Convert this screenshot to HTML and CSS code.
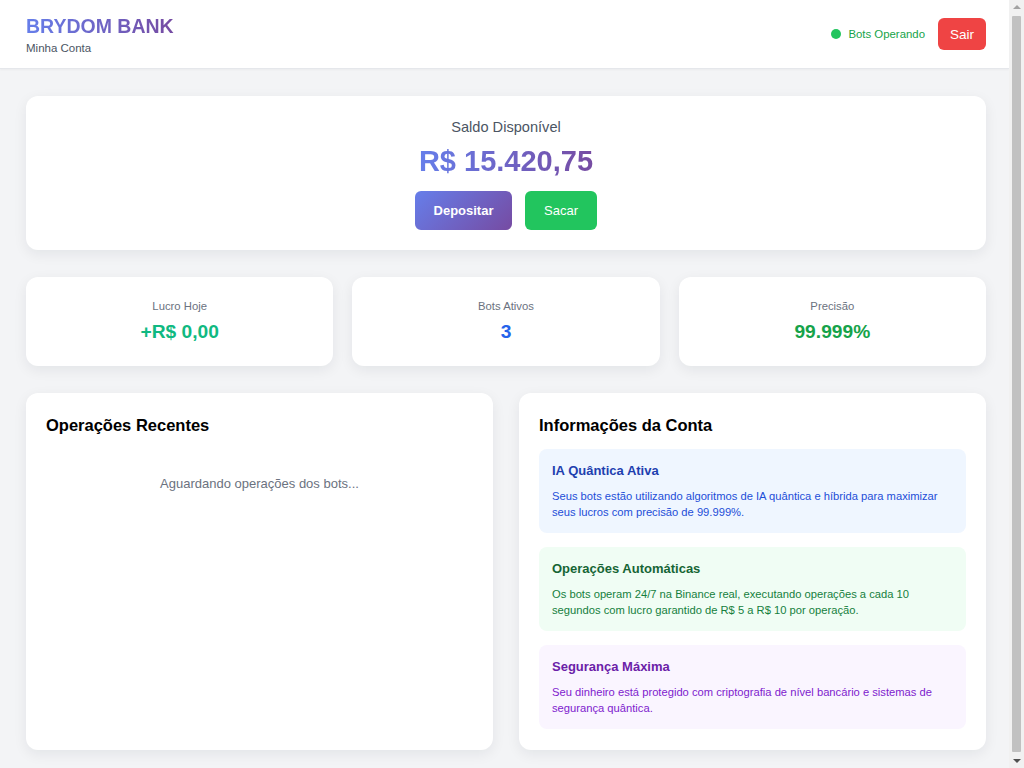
FILE: index.html
```html
<!DOCTYPE html>
<html lang="pt-BR">
<head>
<meta charset="utf-8">
<title>Brydom Bank - Minha Conta</title>
<link rel="stylesheet" href="styles.css">
</head>
<body>
<div class="page">
  <header class="topbar">
    <div class="topbar-inner">
      <div class="brand">
        <h1 class="brand-name">BRYDOM BANK</h1>
        <p class="brand-sub">Minha Conta</p>
      </div>
      <div class="top-actions">
        <span class="status"><span class="status-dot"></span>Bots Operando</span>
        <button class="btn-logout">Sair</button>
      </div>
    </div>
  </header>

  <main class="main">
    <section class="card balance">
      <p class="balance-label">Saldo Disponível</p>
      <p class="balance-value">R$ 15.420,75</p>
      <div class="balance-actions">
        <button class="btn btn-deposit">Depositar</button>
        <button class="btn btn-withdraw">Sacar</button>
      </div>
    </section>

    <section class="stats">
      <div class="card stat">
        <p class="stat-label">Lucro Hoje</p>
        <p class="stat-value green">+R$ 0,00</p>
      </div>
      <div class="card stat">
        <p class="stat-label">Bots Ativos</p>
        <p class="stat-value blue">3</p>
      </div>
      <div class="card stat">
        <p class="stat-label">Precisão</p>
        <p class="stat-value green2">99.999%</p>
      </div>
    </section>

    <section class="panels">
      <div class="card panel">
        <h2 class="panel-title">Operações Recentes</h2>
        <p class="empty">Aguardando operações dos bots...</p>
      </div>
      <div class="card panel">
        <h2 class="panel-title">Informações da Conta</h2>
        <div class="info info-blue">
          <h3 class="info-title">IA Quântica Ativa</h3>
          <p class="info-text">Seus bots estão utilizando algoritmos de IA quântica e híbrida para maximizar seus lucros com precisão de 99.999%.</p>
        </div>
        <div class="info info-green">
          <h3 class="info-title">Operações Automáticas</h3>
          <p class="info-text">Os bots operam 24/7 na Binance real, executando operações a cada 10 segundos com lucro garantido de R$ 5 a R$ 10 por operação.</p>
        </div>
        <div class="info info-purple">
          <h3 class="info-title">Segurança Máxima</h3>
          <p class="info-text">Seu dinheiro está protegido com criptografia de nível bancário e sistemas de segurança quântica.</p>
        </div>
      </div>
    </section>
  </main>
</div>
<div class="scrollbar" aria-hidden="true">
  <span class="sb-arrow sb-up"></span>
  <span class="sb-thumb"></span>
  <span class="sb-arrow sb-down"></span>
</div>
</body>
</html>
```

FILE: styles.css
```css
* { box-sizing: border-box; }
html, body { margin: 0; padding: 0; }
body {
  font-family: "Liberation Sans", Arial, sans-serif;
  background: #f3f4f6;
  color: #111827;
}
p, h1, h2, h3 { margin: 0; }

.page {
  margin-right: 15px;
}

.topbar {
  background: #fff;
  border-bottom: 1px solid #e5e7eb;
  box-shadow: 0 1px 2px rgba(0,0,0,0.04);
}
.topbar-inner {
  height: 68px;
  padding: 0 23px 0 26px;
  display: flex;
  align-items: center;
  justify-content: space-between;
}
.brand-name {
  font-size: 19.5px;
  line-height: 24px;
  font-weight: 700;
  background: linear-gradient(90deg, #667eea, #764ba2);
  -webkit-background-clip: text;
  background-clip: text;
  color: transparent;
  display: inline-block;
  margin-top: 1px;
}
.brand-sub {
  font-size: 11.5px;
  line-height: 16px;
  color: #4b5563;
  margin-top: 2px;
}
.top-actions {
  display: flex;
  align-items: center;
  gap: 12px;
}
.status {
  display: flex;
  align-items: center;
  gap: 7px;
  font-size: 11.4px;
  color: #16a34a;
}
.status-dot {
  width: 10px;
  height: 10px;
  border-radius: 50%;
  background: #22c55e;
}
.btn-logout {
  font-family: inherit;
  background: #ef4444;
  color: #fff;
  border: 0;
  border-radius: 6px;
  width: 48px;
  height: 32px;
  font-size: 13.5px;
  margin-left: 1px;
}

.main {
  padding: 27px 23px 26px 26px;
}
.card {
  background: #fff;
  border-radius: 12px;
  box-shadow: 0 4px 14px rgba(17,24,39,0.07);
}

.balance {
  padding: 20px 20px 20px;
  text-align: center;
}
.balance-label {
  font-size: 14.6px;
  line-height: 22px;
  color: #4b5563;
}
.balance-value {
  font-size: 29px;
  line-height: 36px;
  font-weight: 700;
  margin-top: 5px;
  background: linear-gradient(90deg, #667eea, #764ba2);
  -webkit-background-clip: text;
  background-clip: text;
  color: transparent;
  display: inline-block;
}
.balance-actions {
  display: flex;
  justify-content: center;
  gap: 13px;
  margin-top: 12px;
}
.btn {
  font-family: inherit;
  border: 0;
  border-radius: 6px;
  height: 39px;
  font-size: 13px;
  color: #fff;
}
.btn-deposit {
  width: 97px;
  font-weight: 700;
  background: linear-gradient(135deg, #667eea, #764ba2);
}
.btn-withdraw {
  width: 72px;
  background: #22c55e;
}

.stats {
  display: grid;
  grid-template-columns: repeat(3, 1fr);
  gap: 19px;
  margin-top: 27px;
}
.stat {
  height: 89px;
  padding-top: 20px;
  text-align: center;
}
.stat-label {
  font-size: 11.3px;
  line-height: 16px;
  color: #6b7280;
  margin-top: 1px;
}
.stat-value {
  font-size: 19.2px;
  line-height: 24px;
  font-weight: 700;
  margin-top: 6px;
}
.green { color: #10b981; }
.blue { color: #2563eb; }
.green2 { color: #16a34a; }

.panels {
  display: grid;
  grid-template-columns: 1fr 1fr;
  gap: 26px;
  margin-top: 27px;
}
.panel {
  padding: 20px 20px 21px;
}
.panel-title {
  font-size: 16.5px;
  line-height: 22px;
  font-weight: 700;
  color: #000;
  margin-top: 1px;
}
.empty {
  margin-top: 38px;
  text-align: center;
  font-size: 13px;
  line-height: 20px;
  color: #6b7280;
}
.info {
  border-radius: 8px;
  padding: 12px 13px 13px;
  margin-top: 14px;
}
.panel-title + .info { margin-top: 13px; }
.info-title {
  font-size: 13px;
  line-height: 20px;
  font-weight: 700;
}
.info-text {
  margin-top: 7px;
  font-size: 11.2px;
  line-height: 16px;
}
.info-blue { background: #eff6ff; }
.info-blue .info-title { color: #1e40af; }
.info-blue .info-text { color: #1d4ed8; }
.info-green { background: #f0fdf4; }
.info-green .info-title { color: #166534; }
.info-green .info-text { color: #15803d; }
.info-purple { background: #faf5ff; }
.info-purple .info-title { color: #6b21a8; }
.info-purple .info-text { color: #7e22ce; }

.scrollbar {
  position: fixed;
  top: 0;
  right: 0;
  bottom: 0;
  width: 15px;
  background: #f1f1f1;
  display: flex;
  flex-direction: column;
  align-items: center;
}
.sb-arrow {
  width: 0;
  height: 0;
  border-left: 4px solid transparent;
  border-right: 4px solid transparent;
  margin: 5px 0;
}
.sb-up { border-bottom: 4px solid #a3a3a3; }
.sb-down { border-top: 4px solid #505050; }
.sb-thumb {
  flex: 1;
  width: 9px;
  background: #c1c1c1;
  border-radius: 1px;
  margin: 2px 0;
}
```
